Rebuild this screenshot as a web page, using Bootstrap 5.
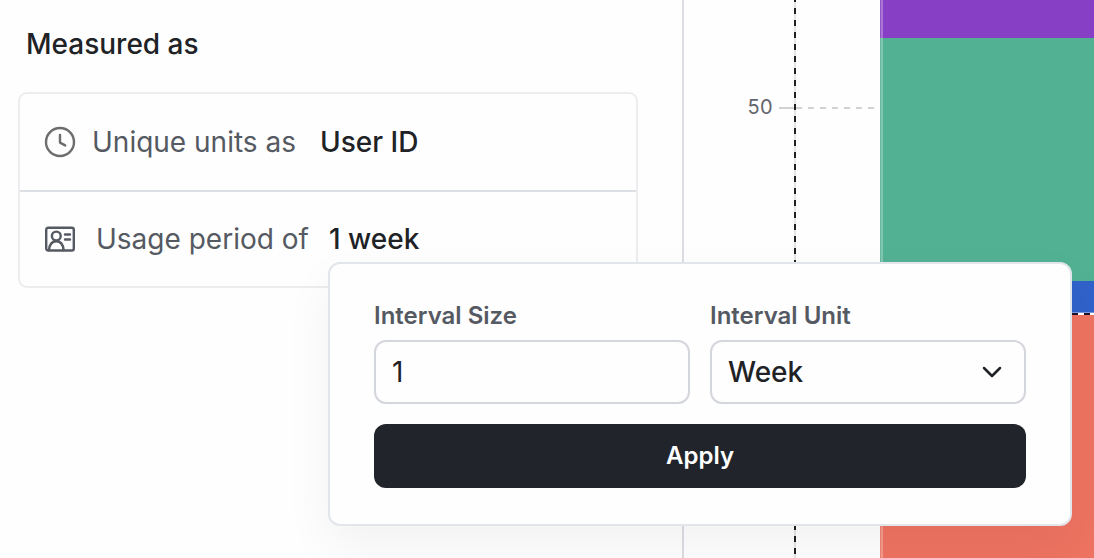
<!DOCTYPE html>
<html lang="en">
<head>
<meta charset="utf-8">
<meta name="viewport" content="width=device-width, initial-scale=1">
<title>Measured as</title>
<link href="https://cdn.jsdelivr.net/npm/bootstrap@5.3.0/dist/css/bootstrap.min.css" rel="stylesheet">
<style>
  body { font-family: "Inter", sans-serif; color: #202226; background: #fefefe; font-size: 28px; line-height: 36px; }
  .app-view { height: 558px; }
  .side-panel { width: 684px; border-right: 2px solid #dbdde3; padding: 26px 44px 0 18px; }
  .panel-title { font-size: 28px; line-height: 36px; font-weight: 500; margin: 0 0 30px 8px; }
  .measure-list { --bs-list-group-border-color: #ededef; --bs-list-group-border-width: 2px; --bs-list-group-border-radius: 9px; --bs-list-group-bg: #fefefe; width: 620px; }
  .measure-list .list-group-item { height: 98px; padding: 0 24px; }
  .measure-list .list-group-item:first-child { border-bottom: 0; }
  .measure-list .list-group-item + .list-group-item { border-top: 0; }
  .item-rule { height: 2px; margin: 0 -24px; background: #dbdee3; }
  .item-row { height: 94px; }
  .muted-text { color: #555962; margin-left: 16px; }
  .value-text { font-weight: 500; color: #202226; margin-left: 24px; }
  .item-row .muted-text, .item-row .value-text { margin-left: 20px; }
  .axis-area { width: 196px; }
  .bar-stack > div { border-left: 1px solid rgba(255,255,255,.1); box-shadow: inset 2px 0 0 rgba(255,255,255,.28); }
  .seg-purple { height: 38px; background: #8740c5; }
  .seg-green { height: 243px; background: #53b193; }
  .seg-blue { height: 32px; background: linear-gradient(#3062ca 31px, #7b9bdf 31px); }
  .bar-stack > .seg-mark { height: 2px; border-left: 0; background: repeating-linear-gradient(90deg, #1d1230 0 6px, #fff 6px 12px); }
  .seg-red { background: #ee7361; }
  .interval-popover { left: 328px; top: 262px; width: 744px; height: 264px; padding: 36px 44px; background: #fefefe; border: 2px solid #e2e5ea; border-radius: 12px; box-shadow: 0 20px 50px rgba(0,0,0,.05); }
  .field-label { display: block; font-size: 24px; line-height: 32px; font-weight: 600; color: #555962; margin-bottom: 8px; }
  .field-col { width: 316px; }
  .field-gap { gap: 20px; }
  .field-box { height: 64px; border: 2px solid #d3d6db; border-radius: 12px; padding: 0 16px; font-size: 28px; color: #202226; background: #fefefe; }
  .field-box:focus { box-shadow: none; }
  .unit-value { font-weight: 500; }
  .btn-apply { height: 64px; margin-top: 20px; border: 0; border-radius: 12px; font-size: 24px; font-weight: 600; background: #21242b; color: #fff; }
</style>
</head>
<body class="overflow-hidden">
<main class="app-view d-flex position-relative overflow-hidden">
  <section class="side-panel flex-shrink-0">
    <h2 class="panel-title">Measured as</h2>
    <div class="list-group measure-list">
      <div class="list-group-item d-flex align-items-center">
        <svg width="32" height="32" viewBox="0 0 32 32" fill="none" stroke="#6c6d6e" stroke-width="2.4" stroke-linecap="round" stroke-linejoin="round"><circle cx="16" cy="16" r="14"/><path d="M16 9v7.6l5.2 2.8"/></svg>
        <span class="muted-text">Unique units as</span>
        <span class="value-text">User ID</span>
      </div>
      <div class="list-group-item">
        <div class="item-rule"></div>
        <div class="item-row d-flex align-items-center">
          <svg width="32" height="32" viewBox="0 0 32 32" fill="none" stroke="#555962" stroke-width="2.4" stroke-linecap="round"><rect x="2.2" y="4.7" width="27.6" height="22.8" rx="2"/><circle cx="12.3" cy="13" r="4.4"/><path d="M5 27c.5-5.500 3-8.800 7.300-8.800s6.800 3.300 7.300 8.800M21 11.500h5M21 16.500h5"/></svg>
          <span class="muted-text">Usage period of</span>
          <span class="value-text">1 week</span>
        </div>
      </div>
    </div>
  </section>
  <section class="d-flex flex-grow-1">
    <svg class="axis-area flex-shrink-0" width="196" height="558" viewBox="0 0 196 558">
      <text x="89" y="114" text-anchor="end" font-size="20" letter-spacing=".4" fill="#62656d">50</text>
      <path d="M95 108h15" stroke="#d2d2d2" stroke-width="2"/>
      <path d="M112 108h84" stroke="#d2d2d2" stroke-width="2" stroke-dasharray="6"/>
      <path d="M111 0v558" stroke="#e4e4e4" stroke-width="2"/>
      <path d="M111 -4v562" stroke="#202020" stroke-width="2" stroke-dasharray="6"/>
    </svg>
    <div class="bar-stack d-flex flex-column flex-grow-1">
      <div class="seg-purple"></div>
      <div class="seg-green"></div>
      <div class="seg-blue"></div>
      <div class="seg-mark"></div>
      <div class="seg-red flex-grow-1"></div>
    </div>
  </section>
  <form class="interval-popover position-absolute">
    <div class="d-flex field-gap">
      <div class="field-col">
        <label class="field-label" for="size">Interval Size</label>
        <input class="form-control field-box" id="size" type="text" value="1">
      </div>
      <div class="field-col">
        <span class="field-label">Interval Unit</span>
        <div class="field-box d-flex align-items-center justify-content-between">
          <span class="unit-value">Week</span>
          <svg width="32" height="32" viewBox="0 0 32 32" fill="none" stroke="#202226" stroke-width="2.5" stroke-linecap="round" stroke-linejoin="round"><path d="M8 12l8 8 8-8"/></svg>
        </div>
      </div>
    </div>
    <button class="btn btn-apply w-100" type="button">Apply</button>
  </form>
</main>
<script src="https://cdn.jsdelivr.net/npm/bootstrap@5.3.0/dist/js/bootstrap.bundle.min.js"></script>
</body>
</html>
